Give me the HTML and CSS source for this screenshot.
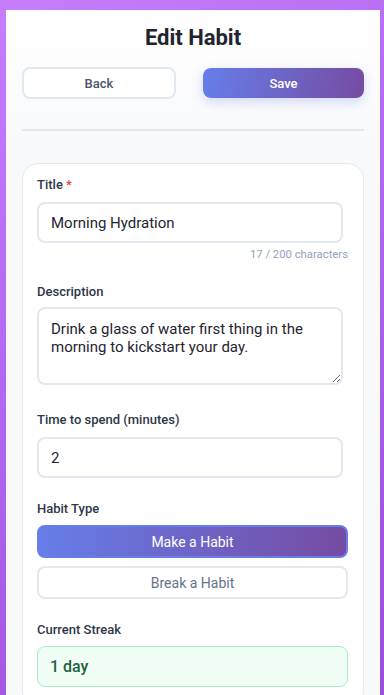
FILE: index.html
```html
<!DOCTYPE html>
<html lang="en">
<head>
<meta charset="utf-8">
<title>Edit Habit</title>
<link rel="stylesheet" href="styles.css">
</head>
<body>
<div class="screen">
  <main class="panel">
    <h1 class="page-title">Edit Habit</h1>
    <div class="actions">
      <button class="btn btn-back" type="button">Back</button>
      <button class="btn btn-save" type="button">Save</button>
    </div>
    <hr class="divider">
    <form class="card">
      <div class="field field-title">
        <label class="label">Title <span class="req">*</span></label>
        <div class="input">Morning Hydration</div>
        <div class="count">17 / 200 characters</div>
      </div>
      <div class="field field-desc">
        <label class="label">Description</label>
        <textarea class="textarea" readonly>Drink a glass of water first thing in the morning to kickstart your day.</textarea>
      </div>
      <div class="field field-time">
        <label class="label">Time to spend (minutes)</label>
        <div class="input">2</div>
      </div>
      <div class="field field-type">
        <label class="label">Habit Type</label>
        <div class="type-list">
          <button class="type-btn type-active" type="button">Make a Habit</button>
          <button class="type-btn" type="button">Break a Habit</button>
        </div>
      </div>
      <div class="field field-streak">
        <label class="label">Current Streak</label>
        <div class="streak">1 day</div>
      </div>
    </form>
  </main>
</div>
</body>
</html>
```
FILE: styles.css
```css
* { box-sizing: border-box; }
html, body {
  margin: 0;
  padding: 0;
  height: 100%;
}
body {
  font-family: Roboto, "Noto Sans", "Liberation Sans", sans-serif;
  background: linear-gradient(150deg, #c77dfb 0%, #b066f0 45%, #9b4ddc 100%);
  overflow: hidden;
}
.screen {
  padding: 10px 4px 0 6px;
  height: 100%;
}
.panel {
  width: 374px;
  min-height: 720px;
  background: linear-gradient(to bottom, #ffffff 0%, #f8f9fb 20%, #f8f9fb 100%);
  padding: 14px 16px 40px;
}
.page-title {
  margin: 0;
  text-align: center;
  font-size: 22px;
  line-height: 28px;
  font-weight: 700;
  color: #1f2430;
}
.actions {
  display: flex;
  align-items: center;
  gap: 27px;
  margin-top: 15px;
}
.btn {
  font-family: inherit;
  font-size: 13px;
  border-radius: 8px;
  cursor: pointer;
}
.btn-back {
  width: 154px;
  height: 32px;
  background: #fff;
  border: 2px solid #e2e8f0;
  color: #4a5568;
  font-weight: 500;
}
.btn-save {
  flex: 1;
  height: 30px;
  border: none;
  color: #fff;
  font-weight: 500;
  background: linear-gradient(100deg, #667eea 0%, #764ba2 100%);
  box-shadow: 0 4px 12px rgba(102, 126, 234, 0.28);
}
.divider {
  margin: 30px 0 0;
  border: none;
  height: 2px;
  background: #e2e8f0;
}
.card {
  margin-top: 32px;
  background: #fff;
  border: 1px solid #e5e9f0;
  border-radius: 16px;
  padding: 12px 15px 20px 14px;
}
.label {
  display: block;
  font-size: 13px;
  line-height: 18px;
  font-weight: 500;
  color: #2d3748;
  margin-bottom: 8px;
}
.req { color: #e53e3e; }
.field-title { margin-bottom: 21px; }
.field-desc { margin-bottom: 26px; }
.field-desc .label { margin-bottom: 6px; }
.field-time { margin-bottom: 22px; }
.field-type { margin-bottom: 22px; }
.field-type .label,
.field-streak .label { margin-bottom: 7px; }
.input {
  width: calc(100% - 5px);
  height: 41px;
  border: 2px solid #e2e8f0;
  border-radius: 8px;
  background: #fff;
  padding: 0 12px;
  display: flex;
  align-items: center;
  font-size: 15px;
  color: #1f2430;
}
.count {
  margin-top: 5px;
  text-align: right;
  font-size: 11.3px;
  line-height: 14px;
  color: #94a3b8;
}
.textarea {
  display: block;
  width: calc(100% - 5px);
  height: 78px;
  border: 2px solid #e2e8f0;
  border-radius: 8px;
  background: #fff;
  padding: 11px 12px;
  font-family: inherit;
  font-size: 15px;
  line-height: 18px;
  color: #1f2430;
  resize: vertical;
  outline: none;
  margin: 0;
}
.type-list {
  display: flex;
  flex-direction: column;
  gap: 8px;
}
.type-btn {
  height: 33px;
  width: 100%;
  border: 2px solid #e2e8f0;
  border-radius: 8px;
  background: #fff;
  font-family: inherit;
  font-size: 14px;
  color: #64748b;
}
.type-active {
  background: linear-gradient(100deg, #667eea 0%, #764ba2 100%);
  border-color: #667eea;
  color: #fff;
}
.streak {
  height: 41px;
  border: 1px solid #a8ecc0;
  border-radius: 8px;
  background: #effdf4;
  padding: 0 12px;
  display: flex;
  align-items: center;
  font-size: 16px;
  font-weight: 500;
  color: #25603f;
}
```
